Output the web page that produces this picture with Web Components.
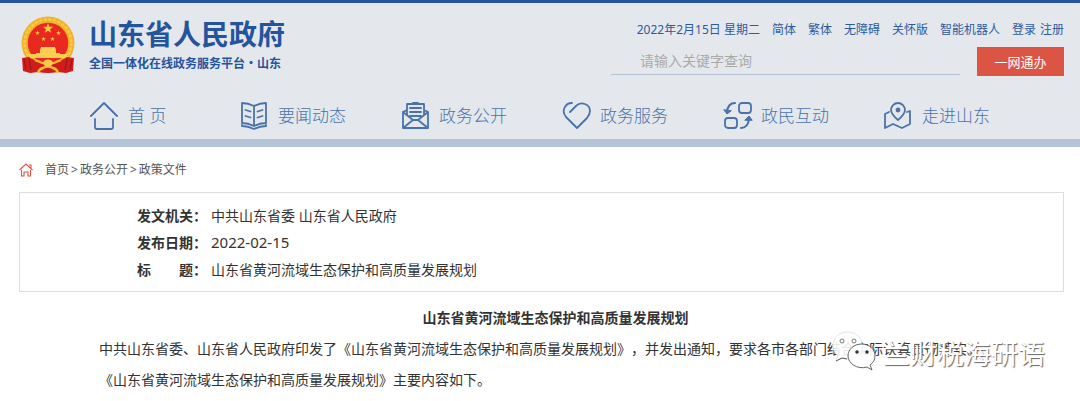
<!DOCTYPE html>
<html lang="zh-CN">
<head>
<meta charset="utf-8">
<title>山东省人民政府</title>
<style>
body { margin: 0; background: #fff; color: #333; font: 14px/20px "Noto Sans", "Noto Sans CJK SC", sans-serif; text-spacing-trim: space-all; }
</style>
</head>
<body>
<gov-page></gov-page>
<script>
function define(name, html) {
  const t = document.createElement('template');
  t.innerHTML = html;
  customElements.define(name, class extends HTMLElement {
    constructor() {
      super();
      this.attachShadow({ mode: 'open' }).append(t.content.cloneNode(true));
    }
  });
}

const star = (cx, cy, r) => {
  let p = [];
  for (let i = 0; i < 10; i++) {
    const a = -Math.PI / 2 + i * Math.PI / 5, q = i % 2 ? r * 0.4 : r;
    p.push((cx + q * Math.cos(a)).toFixed(2) + ',' + (cy + q * Math.sin(a)).toFixed(2));
  }
  return `<polygon points="${p.join(' ')}"/>`;
};

define('gov-emblem', `
<style>:host{display:block} svg{display:block}</style>
<svg width="54" height="58" viewBox="0 0 54 58" role="img" aria-label="国徽">
  <circle cx="27" cy="27" r="26.5" fill="#f0b42c"/>
  <circle cx="27" cy="27" r="23.5" fill="none" stroke="#f7cb4c" stroke-width="2.4" stroke-dasharray="3 1.6"/>
  <circle cx="27" cy="27" r="20.3" fill="#e9281f"/>
  <g fill="#f7cc45">${star(27, 12.5, 5.4)}${star(16.5, 17, 2.5)}${star(37.500, 17, 2.5)}${star(22.500, 23, 2.5)}${star(31.500, 23, 2.5)}</g>
  <path d="M20 31h14l1 3H19zM19 34h16v3h4v3H15v-3h4zM7 38h40l-2 4H9z" fill="#f8cf50"/>
  <path d="M1 42l7-1q5 4 12 4l7 2 7-2q7 0 12-4l7 1-1 13-7 2-8-1q-10 2-20 0l-8 1-7-2z" fill="#d01c1c"/>
  <path d="M8 42l2 12M46 42l-2 12M3 43l2 10M51 43l-2 10" stroke="#971618" stroke-width="1" fill="none"/>
  <path d="M14 44q13 7 26 0M17 57q1-4 5-5 5-3 10 0 4 1 5 5" stroke="#f5bd32" stroke-width="2.500" fill="none"/>
  <ellipse cx="27" cy="47" rx="5" ry="3.500" fill="#f7ca4b"/>
</svg>`);

const icons = {
  home: '<path d="M1 15 14 2 27 15M5 18v8q0 2 2 2h14q2 0 2-2v-8"/>',
  book: '<path d="M14 5Q8 2 2 2v20q6 0 12 3 6-3 12-3V2q-6 0-12 3v20M2 24v1q6 0 12 3 6-3 12-3v-1M5.500 9l5 1.500M5.500 15l5 1.500M22.500 9l-5 1.500M22.500 15l-5 1.500"/>',
  mail: '<path d="M2 11v16h25V11l-4-2M2 11l4-2M2 27l10-8h5l10 8M2 11l10 8M27 11l-10 8M6 14V3h17v11M9 7h11M9 11h11M9 15h11M12 2h5"/>',
  heart: '<path d="M8 11l6-6C19 0 28 3 28 10q0 3-3 7L15 27 4 16C-1 10 3 2 10 2"/>',
  cycle: '<rect x="16" y="2" width="12" height="10" rx="3"/><rect x="2" y="17" width="12" height="10" rx="3"/><path d="M12 2Q5 2 4 11M18 27q7 0 8-9" stroke-width="2.200"/><path d="M1 9l3 4 4-3zM22 19l4-4 3 4z" fill="#4a72a8" stroke-width="1"/>',
  map: '<path d="M14 19Q7 13 7 9a7 7 0 0 1 14 0q0 4-7 10zM5 11l-4 2v14l8-4 9 4 8-4V10l-3 1"/><circle cx="14" cy="9" r="1.500" fill="#4a72a8"/>'
};
customElements.define('nav-item', class extends HTMLElement {
  constructor() {
    super();
    this.attachShadow({ mode: 'open' }).innerHTML = `
<style>
:host{display:block}
a{display:flex;align-items:center;gap:8px;color:#4a72a8;text-decoration:none;font-size:17px;line-height:24px;font-weight:300;white-space:nowrap}
svg{width:30px;height:30px;fill:none;stroke:#4a72a8;stroke-width:1.8;stroke-linecap:round;stroke-linejoin:round}
</style>
<a href="#"><svg viewBox="0 0 30 30" aria-hidden="true">${icons[this.getAttribute('icon')]}</svg><slot></slot></a>`;
  }
});

define('site-brand', `
<style>
:host{display:flex;gap:14px;color:#24549c}
h1{margin:0;font-size:28px;line-height:34px;font-weight:700}
p{margin:0;font-size:12px;line-height:24px;font-weight:700;font-family:"Noto Sans CJK SC",sans-serif}
div{padding-top:1px}
</style>
<gov-emblem></gov-emblem>
<div><h1>山东省人民政府</h1><p>全国一体化在线政务服务平台·山东</p></div>`);

define('site-tools', `
<style>
:host{display:block;width:453px;color:#2c5a9e;font-size:12px}
.links{display:flex;justify-content:flex-end;gap:12px;white-space:nowrap;line-height:18px;padding-top:5px}
a{color:inherit;text-decoration:none}
.auth{display:flex;gap:4px}
form{display:flex;align-items:stretch;gap:17px;margin-top:8px}
input{flex:1;min-width:0;box-sizing:border-box;height:28px;border:0;border-bottom:1px solid #b4c2d5;background:none;padding:0 29px;font:inherit;font-size:14px;color:#555;outline:0}
input::placeholder{color:#aaa;opacity:1}
button{width:87px;height:29px;border:0;background:#db5444;color:#fff;font:inherit;font-size:13px;padding:0}
</style>
<div class="links"><span>2022年2月15日 星期二</span><a href="#">简体</a><a href="#">繁体</a><a href="#">无障碍</a><a href="#">关怀版</a><a href="#">智能机器人</a><span class="auth"><a href="#">登录</a><a href="#">注册</a></span></div>
<form><input type="text" aria-label="搜索" placeholder="请输入关键字查询"><button type="button">一网通办</button></form>`);

define('site-header', `
<style>
:host{display:block;background:#e4e8ed;border-top:3px solid #24549c;border-bottom:8px solid #b5c4d6}
.top{display:flex;justify-content:space-between;padding:13px 16px 0 21px}
nav{display:grid;grid-template-columns:150fr repeat(5,161fr);padding:25px 35px 8px 90px}
</style>
<div class="top"><site-brand></site-brand><site-tools></site-tools></div>
<nav aria-label="主导航">
<nav-item icon="home">首 页</nav-item><nav-item icon="book">要闻动态</nav-item><nav-item icon="mail">政务公开</nav-item><nav-item icon="heart">政务服务</nav-item><nav-item icon="cycle">政民互动</nav-item><nav-item icon="map">走进山东</nav-item>
</nav>`);

define('bread-crumb', `
<style>
:host{display:flex;align-items:center;gap:12px;padding:13px 19px 12px;font-size:12px;line-height:20px;color:#555}
a{color:inherit;text-decoration:none}
nav{display:flex;gap:2px}
svg{display:block}
</style>
<svg width="14" height="14" viewBox="0 0 14 14" fill="none" stroke="#db5444" stroke-width="1.100" aria-hidden="true"><path d="M.5 7 7 1l6.500 6M10 2h2v3M2.500 7v6H5V9h4v4h2.500V7"/></svg>
<nav aria-label="面包屑"><a href="#">首页</a><span>&gt;</span><a href="#">政务公开</a><span>&gt;</span><a href="#">政策文件</a></nav>`);

define('doc-meta', `
<style>
:host{display:block;margin:0 16px 0 19px;border:1px solid #ddd;padding:9px 117px 8px}
dl{display:grid;grid-template-columns:70px 1fr;column-gap:4px;margin:0;line-height:27px}
dt{font-weight:700;display:flex;justify-content:space-between;white-space:nowrap}
dd{margin:0}
.date{font-size:15px}
</style>
<dl><dt>发文机关：</dt><dd>中共山东省委 山东省人民政府</dd>
<dt>发布日期：</dt><dd class="date">2022-02-15</dd>
<dt><span>标</span><span>题：</span></dt><dd>山东省黄河流域生态保护和高质量发展规划</dd></dl>`);

define('account-mark', `
<style>
:host{display:flex;align-items:flex-start;gap:7px;color:#fff;font-size:27px;line-height:46px;white-space:nowrap;text-shadow:1px 1px 1px #666}
svg{display:block}
</style>
<svg width="44" height="40" viewBox="0 0 44 40" aria-hidden="true">
<path d="M15 1C7 1 1 7 1 14c0 5 2 8 5 11l-2 5 6-3c10 3 20-3 20-13C30 7 24 1 15 1z" fill="#fff" fill-opacity=".88" stroke="#ddd" stroke-width=".8"/>
<path d="M4 30l6-3 5 1" fill="none" stroke="#555"/>
<circle cx="10" cy="10" r="2" fill="#fff" stroke="#777"/><circle cx="22" cy="10" r="2" fill="#fff" stroke="#777"/>
<path d="M30 13c-8 0-14 5-14 12s9 14 19 11l5 3-2-5c3-2 5-5 5-9 0-7-6-12-13-12z" fill="#fff" fill-opacity=".9" stroke="#555" stroke-width=".9"/>
<circle cx="25" cy="21" r="1.800" fill="#333"/><circle cx="35" cy="21" r="1.800" fill="#333"/>
</svg><span><slot></slot></span>`);

define('doc-body', `
<style>
:host{display:block;position:relative;margin:0 16px 0 19px;padding:11px 80px 6px}
h2{margin:0;font-size:14px;line-height:30px;font-weight:700;text-align:center;text-indent:28px}
p{margin:0;line-height:31px}
account-mark{position:absolute;right:19px;top:39px}
</style>
<h2>山东省黄河流域生态保护和高质量发展规划</h2>
<p>中共山东省委、山东省人民政府印发了《山东省黄河流域生态保护和高质量发展规划》，并发出通知，要求各市各部门结合实际认真贯彻落实。</p>
<p>《山东省黄河流域生态保护和高质量发展规划》主要内容如下。</p>
<account-mark>兰财税海研语</account-mark>`);

define('gov-page', `
<style>:host{display:block}</style>
<site-header></site-header>
<main><bread-crumb></bread-crumb><doc-meta></doc-meta><doc-body></doc-body></main>`);
</script>
</body>
</html>
